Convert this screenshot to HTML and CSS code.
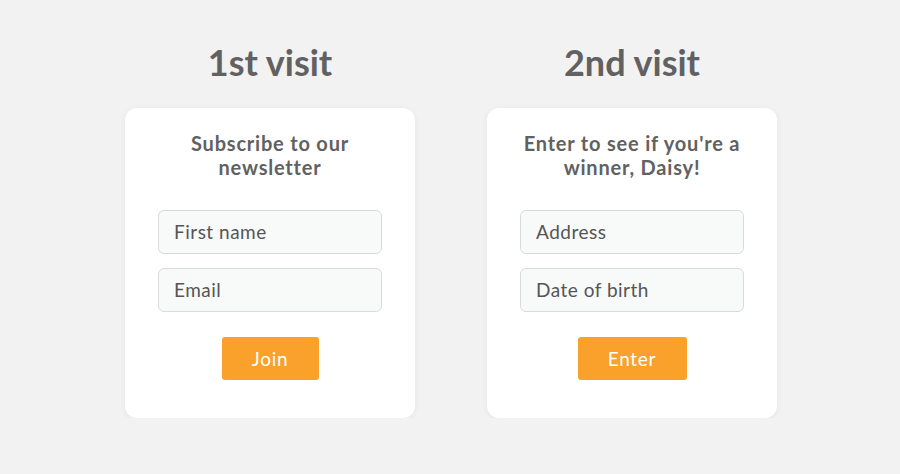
FILE: index.html
```html
<!DOCTYPE html>
<html>
<head>
<meta charset="utf-8">
<link rel="stylesheet" href="styles.css">
</head>
<body>
<main class="page">
  <section class="col">
    <h1 class="visit">1st visit</h1>
    <div class="card">
      <h2 class="card-title">Subscribe to our<br>newsletter</h2>
      <div class="field">First name</div>
      <div class="field">Email</div>
      <div class="btn btn-join">Join</div>
    </div>
  </section>
  <section class="col">
    <h1 class="visit">2nd visit</h1>
    <div class="card">
      <h2 class="card-title">Enter to see if you're a<br>winner, Daisy!</h2>
      <div class="field">Address</div>
      <div class="field">Date of birth</div>
      <div class="btn btn-enter">Enter</div>
    </div>
  </section>
</main>
</body>
</html>
```
FILE: styles.css
```css
html, body {
  margin: 0;
  padding: 0;
  background: #f2f2f2;
  font-family: "Lato", "Open Sans", sans-serif;
  color: #5e5e5e;
}
.page {
  display: flex;
  justify-content: center;
  gap: 72px;
  padding-top: 38px;
  padding-left: 2px;
}
.col {
  width: 290px;
  display: flex;
  flex-direction: column;
  align-items: center;
}
.visit {
  margin: 0;
  height: 70px;
  font-size: 36px;
  line-height: 48px;
  font-weight: 700;
  color: #616161;
}
.card {
  box-sizing: border-box;
  width: 290px;
  height: 310px;
  background: #fff;
  border-radius: 12px;
  box-shadow: 0 1px 6px rgba(0,0,0,0.06);
  padding-top: 23px;
  display: flex;
  flex-direction: column;
  align-items: center;
}
.card-title {
  margin: 0 0 31px;
  font-size: 20px;
  line-height: 24px;
  font-weight: 700;
  letter-spacing: 0.8px;
  text-align: center;
  color: #616161;
}
.field {
  box-sizing: border-box;
  width: 224px;
  height: 44px;
  border: 1.5px solid #dadada;
  border-radius: 6px;
  background: #f8f9f9;
  padding-left: 15px;
  font-size: 19px;
  line-height: 41px;
  letter-spacing: 0.5px;
  color: #555;
  margin-bottom: 14px;
}
.btn {
  margin-top: 11px;
  height: 43px;
  border-radius: 3px;
  background: #f9a12b;
  color: #fff;
  font-size: 19px;
  line-height: 43px;
  letter-spacing: 0.7px;
  text-align: center;
}
.btn-join { width: 97px; }
.btn-enter { width: 109px; }
```
